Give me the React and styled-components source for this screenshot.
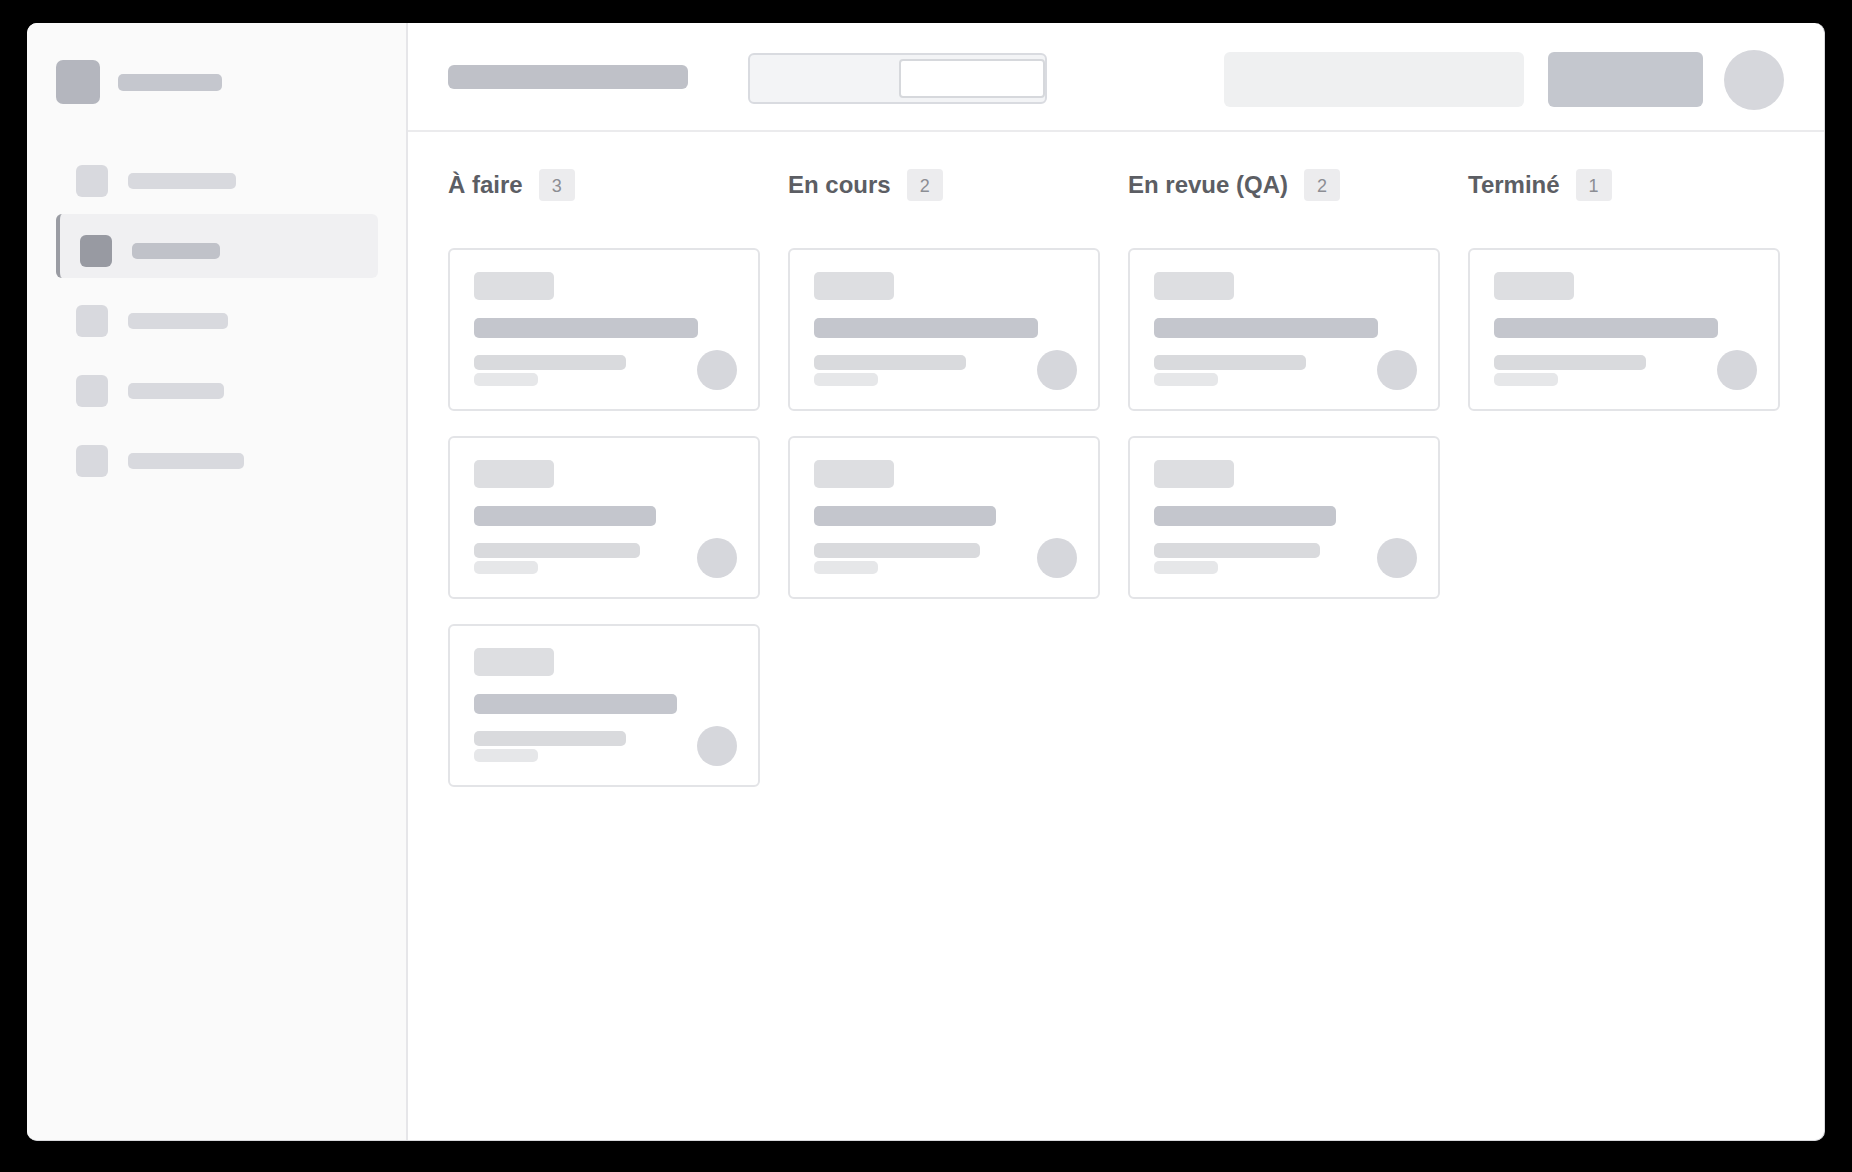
import React from 'react';
import styled, { createGlobalStyle } from 'styled-components';

const GlobalStyle = createGlobalStyle`
  * { box-sizing: border-box; }
  html, body {
    margin: 0;
    padding: 0;
    background: #000;
    font-family: "Liberation Sans", Arial, sans-serif;
  }
`;

const Stage = styled.div`
  width: 1852px;
  height: 1172px;
  padding: 23px 0 0 27px;
  background: #000;
`;

const Window = styled.div`
  width: 1798px;
  height: 1118px;
  display: flex;
  background: #fff;
  border-radius: 10px;
  overflow: hidden;
  border-right: 1px solid #d8d9dc;
  border-bottom: 1px solid #d8d9dc;
`;

const Sidebar = styled.aside`
  width: 381px;
  flex-shrink: 0;
  padding: 37px 28px 37px 29px;
  background: #fafafa;
  border-right: 2px solid #e6e6e9;
  display: flex;
  flex-direction: column;
`;

const Brand = styled.div`
  display: flex;
  align-items: center;
  gap: 18px;
  height: 44px;
  margin-bottom: 40px;
`;

const LogoMark = styled.div`
  width: 44px;
  height: 44px;
  border-radius: 7px;
  background: #b4b6be;
`;

const Bar = styled.div`
  width: ${(p) => p.$w}px;
  height: ${(p) => p.$h}px;
  border-radius: ${(p) => p.$r || 5}px;
  background: ${(p) => p.$c};
  flex-shrink: 0;
`;

const Nav = styled.nav`
  display: flex;
  flex-direction: column;
  gap: 6px;
`;

const NavItem = styled.div`
  height: 64px;
  display: flex;
  align-items: flex-start;
  gap: 20px;
  padding: 21px 20px 0 20px;
  border-radius: 6px;
  background: ${(p) => (p.$active ? '#f0f0f2' : 'transparent')};
  border-left: ${(p) => (p.$active ? '4px solid #9a9ca3' : '0 solid transparent')};
`;

const NavIcon = styled.div`
  width: 32px;
  height: 32px;
  border-radius: 6px;
  background: ${(p) => (p.$active ? '#989aa2' : '#d8d9de')};
`;

const NavLabel = styled.div`
  width: ${(p) => p.$w}px;
  height: 16px;
  margin-top: 8px;
  border-radius: 5px;
  background: ${(p) => (p.$active ? '#c0c2c9' : '#d8d9de')};
`;

const Main = styled.main`
  flex: 1;
  display: flex;
  flex-direction: column;
  min-width: 0;
`;

const Header = styled.header`
  height: 109px;
  padding: 6px 40px 0 40px;
  display: flex;
  align-items: center;
  border-bottom: 2px solid #ebebed;
`;

const PageTitle = styled.div`
  width: 240px;
  height: 24px;
  margin-top: -6px;
  border-radius: 6px;
  background: #bfc1c8;
  margin-right: 60px;
`;

const Segmented = styled.div`
  width: 299px;
  height: 51px;
  margin-top: -2px;
  padding: 4px 0 4px 4px;
  display: flex;
  justify-content: flex-end;
  background: #f3f4f6;
  border: 2px solid #d9dbe0;
  border-radius: 6px;
`;

const Segment = styled.div`
  width: 146px;
  height: 100%;
  background: #fff;
  border: 2px solid #d6d8dc;
  border-radius: 4px;
`;

const Spacer = styled.div`
  flex: 1;
`;

const Search = styled.div`
  width: 300px;
  height: 55px;
  border-radius: 6px;
  background: #eff0f1;
  margin-right: 24px;
`;

const PrimaryButton = styled.div`
  width: 155px;
  height: 55px;
  border-radius: 6px;
  background: #c4c7ce;
  margin-right: 21px;
`;

const UserAvatar = styled.div`
  width: 60px;
  height: 60px;
  border-radius: 50%;
  background: #d6d7dc;
`;

const Board = styled.section`
  padding: 37px 40px 0 40px;
  display: grid;
  grid-template-columns: repeat(4, 312px);
  column-gap: 28px;
  align-items: start;
`;

const Column = styled.div`
  display: flex;
  flex-direction: column;
`;

const ColumnHead = styled.div`
  height: 32px;
  display: flex;
  align-items: center;
  gap: 16px;
  margin-bottom: 47px;
`;

const ColumnTitle = styled.h2`
  margin: 0;
  font-size: 24px;
  font-weight: 700;
  color: #5c5e64;
  line-height: 1;
`;

const Count = styled.span`
  min-width: 36px;
  height: 32px;
  padding: 2px 12px 0;
  display: inline-flex;
  align-items: center;
  justify-content: center;
  border-radius: 4px;
  background: #ececee;
  color: #8c8e94;
  font-size: 18px;
`;

const CardList = styled.div`
  display: flex;
  flex-direction: column;
  gap: 25px;
`;

const Card = styled.div`
  width: 312px;
  height: 163px;
  padding: 22px 21px 19px 24px;
  display: flex;
  flex-direction: column;
  background: #fff;
  border: 2px solid #e3e4e7;
  border-radius: 6px;
`;

const Tag = styled.div`
  width: 80px;
  height: 28px;
  border-radius: 5px;
  background: #dddee1;
  margin-bottom: 18px;
`;

const CardTitle = styled.div`
  width: ${(p) => p.$w}px;
  height: 20px;
  border-radius: 5px;
  background: #c4c6cd;
  margin-bottom: 12px;
`;

const CardFoot = styled.div`
  display: flex;
  align-items: center;
  justify-content: space-between;
`;

const Meta = styled.div`
  display: flex;
  flex-direction: column;
  gap: 3px;
`;

const Assignee = styled.div`
  width: 40px;
  height: 40px;
  border-radius: 50%;
  background: #d6d7dc;
`;

const navItems = [
  { w: 108 },
  { w: 88, active: true },
  { w: 100 },
  { w: 96 },
  { w: 116 },
];

const cardShapes = [
  { title: 224, line: 152 },
  { title: 182, line: 166 },
  { title: 203, line: 152 },
];

const columns = [
  { title: 'À faire', cards: [0, 1, 2] },
  { title: 'En cours', cards: [0, 1] },
  { title: 'En revue (QA)', cards: [0, 1] },
  { title: 'Terminé', cards: [0] },
];

const TaskCard = ({ shape }) => (
  <Card>
    <Tag />
    <CardTitle $w={shape.title} />
    <CardFoot>
      <Meta>
        <Bar $w={shape.line} $h={15} $c="#d9dadd" />
        <Bar $w={64} $h={13} $c="#e6e7e9" />
      </Meta>
      <Assignee />
    </CardFoot>
  </Card>
);

const App = () => (
  <>
    <GlobalStyle />
    <Stage>
      <Window>
        <Sidebar>
          <Brand>
            <LogoMark />
            <Bar $w={104} $h={17} $c="#c5c7ce" />
          </Brand>
          <Nav>
            {navItems.map((item, i) => (
              <NavItem key={i} $active={item.active}>
                <NavIcon $active={item.active} />
                <NavLabel $w={item.w} $active={item.active} />
              </NavItem>
            ))}
          </Nav>
        </Sidebar>
        <Main>
          <Header>
            <PageTitle />
            <Segmented>
              <Segment />
            </Segmented>
            <Spacer />
            <Search />
            <PrimaryButton />
            <UserAvatar />
          </Header>
          <Board>
            {columns.map((col) => (
              <Column key={col.title}>
                <ColumnHead>
                  <ColumnTitle>{col.title}</ColumnTitle>
                  <Count>{col.cards.length}</Count>
                </ColumnHead>
                <CardList>
                  {col.cards.map((s, i) => (
                    <TaskCard key={i} shape={cardShapes[s]} />
                  ))}
                </CardList>
              </Column>
            ))}
          </Board>
        </Main>
      </Window>
    </Stage>
  </>
);

export default App;
